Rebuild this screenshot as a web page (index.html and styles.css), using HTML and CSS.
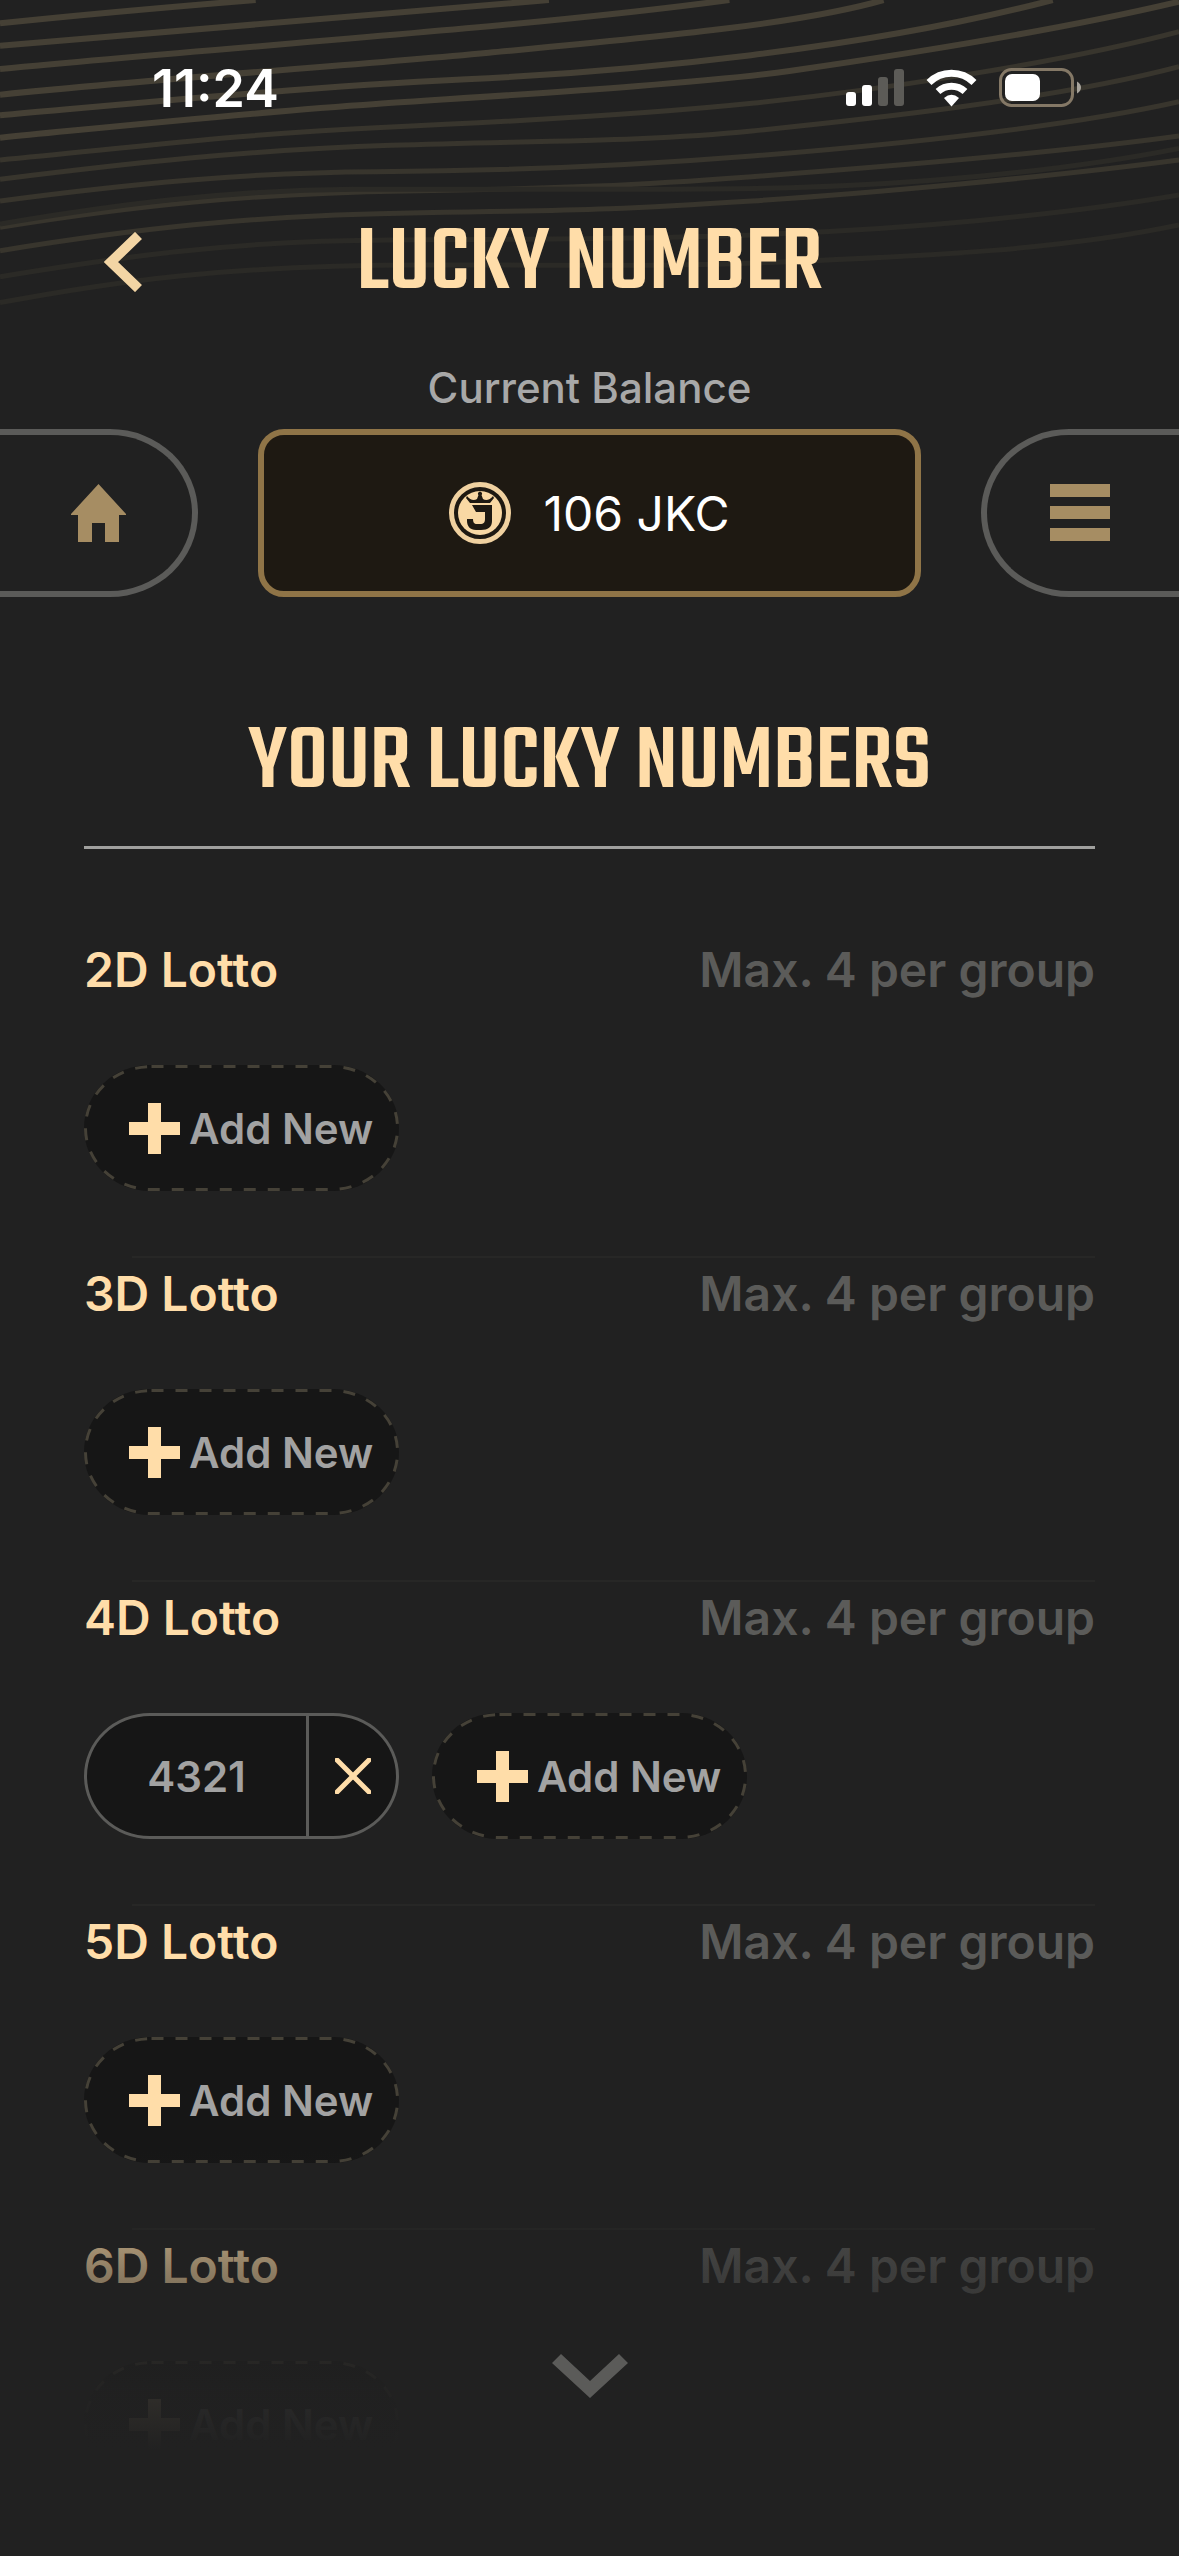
FILE: index.html
```html
<!DOCTYPE html>
<html lang="en">
<head>
<meta charset="utf-8">
<meta name="viewport" content="width=device-width, initial-scale=1">
<title>Lucky Number</title>
<link rel="stylesheet" href="styles.css">
</head>
<body>
<svg class="waves" viewBox="0 0 1568 1020" preserveAspectRatio="none" aria-hidden="true">
  <g class="waves-strong">
    <path d="M0 70C110 44 220 22 340 0"/>
    <path d="M0 137C250 88 500 48 730 0"/>
    <path d="M0 207C350 132 700 82 970 0"/>
    <path d="M0 284C250 228 450 200 650 158S1060 75 1175 0"/>
    <path d="M0 346C200 306 400 262 620 238S1150 148 1400 0"/>
    <path d="M0 413C170 376 330 338 500 312S930 252 1050 213S1400 95 1568 5"/>
  </g>
  <g class="waves-mid">
    <path d="M0 480C170 444 330 400 500 383S850 345 1000 310S1400 195 1568 95"/>
    <path d="M0 538C170 490 330 450 520 436S860 425 1000 393S1400 300 1568 200"/>
    <path d="M0 603C170 552 330 517 500 515S850 495 1000 468S1400 390 1568 305"/>
    <path d="M0 682C170 620 330 580 540 573S850 555 1000 530S1400 460 1568 408"/>
    <path d="M0 752C170 690 330 645 560 638S850 625 1000 603S1400 530 1568 480"/>
  </g>
  <g class="waves-faint">
    <path d="M0 672C150 615 300 570 470 568S900 572 1050 563S1400 520 1568 445"/>
    <path d="M0 830C150 775 300 722 520 720S900 715 1050 700S1400 650 1568 585"/>
    <path d="M0 908C150 845 300 795 560 795S900 800 1050 785S1400 755 1568 675"/>
  </g>
</svg>

<div class="status">
  <time class="clock">11:24</time>
  <svg class="status-icons" viewBox="0 0 236 40" aria-hidden="true">
    <g fill="#fff"><rect x="0" y="24" width="10" height="14" rx="3"/><rect x="16" y="17" width="10" height="21" rx="3"/></g>
    <g fill="#5c5b57"><rect x="32" y="9" width="10" height="29" rx="3"/><rect x="48" y="1" width="10" height="37" rx="3"/></g>
    <g fill="none" stroke="#fff" stroke-width="7"><path d="M83 14.500A32 32 0 0 1 128 14.500"/><path d="M92 23.500A20 20 0 0 1 119 23.500"/></g>
    <path fill="#fff" d="M105.500 38.500L98 30Q105.500 23.500 113 30Z"/>
    <rect x="154.500" y="1.500" width="72" height="36" rx="11" fill="none" stroke="#847866" stroke-width="3"/>
    <rect x="159" y="6" width="35" height="27" rx="7" fill="#fff"/>
    <path fill="#a8a49c" d="M231 13.500Q235 16 235 19.500T231 25.500Z"/>
  </svg>
</div>

<header class="topbar">
  <button class="back" type="button" aria-label="Back">
    <svg viewBox="0 0 38 60"><path d="M34.500 3.500L7 30L34.500 56.500" fill="none" stroke="#f3d5a4" stroke-width="10"/></svg>
  </button>
  <h1 class="title">LUCKY NUMBER</h1>
</header>

<p class="balance-label">Current Balance</p>
<nav class="nav">
  <a class="tab tab-left" href="#home" aria-label="Home">
    <svg class="home" viewBox="0 0 55 58"><path fill="#a68d63" d="M27.500 0L55 30V31H48V58H34V39H21V58H7V31H0V30Z"/></svg>
  </a>
  <div class="balance">
    <svg class="coin" viewBox="0 0 62 62" aria-hidden="true">
      <circle cx="31" cy="31" r="28.500" fill="none" stroke="#f0d1a0" stroke-width="5"/>
      <circle cx="31" cy="31" r="22" fill="#f9d8a4"/>
      <path fill="#1e1912" d="M18 14C21 18 25 19 28 17L29.500 13A2 2 0 1 1 32.500 13L34 17C37 19 41 18 44 14L45 16L41 21H21L17 16ZM23 23H43V39C43 45 39 48 32 48H27C21 48 18 44 18 39V37H24C24 40 25 42 28 42H31C35 42 36 40 36 37V30H27Z"/>
    </svg>
    <span>106 JKC</span>
  </div>
  <button class="tab tab-right" type="button" aria-label="Menu">
    <svg class="menu" viewBox="0 0 60 58"><path fill="#a68d63" d="M0 0H60V13H0ZM0 22H60V35H0ZM0 44H60V57H0Z"/></svg>
  </button>
</nav>

<main class="content">
  <h2 class="title section-title">YOUR LUCKY NUMBERS</h2>

  <section class="group">
    <div class="group-head"><h3>2D Lotto</h3><p>Max. 4 per group</p></div>
    <div class="chips">
      <button class="chip add" type="button">
        <svg class="dashes" viewBox="0 0 315 126"><rect x="1.500" y="1.500" width="312" height="123" rx="66" ry="61"/></svg>
        <svg class="plus" viewBox="0 0 51 51"><path d="M19 0H32V19H51V32H32V51H19V32H0V19H19Z"/></svg>
        Add New
      </button>
    </div>
  </section>

  <section class="group">
    <div class="group-head"><h3>3D Lotto</h3><p>Max. 4 per group</p></div>
    <div class="chips">
      <button class="chip add" type="button">
        <svg class="dashes" viewBox="0 0 315 126"><rect x="1.500" y="1.500" width="312" height="123" rx="66" ry="61"/></svg>
        <svg class="plus" viewBox="0 0 51 51"><path d="M19 0H32V19H51V32H32V51H19V32H0V19H19Z"/></svg>
        Add New
      </button>
    </div>
  </section>

  <section class="group">
    <div class="group-head"><h3>4D Lotto</h3><p>Max. 4 per group</p></div>
    <div class="chips">
      <div class="chip number">
        <span>4321</span>
        <button class="remove" type="button" aria-label="Remove 4321"><svg viewBox="0 0 36 36"><path d="M2 2L34 34M34 2L2 34" stroke="#ffdda9" stroke-width="5" stroke-linecap="round"/></svg></button>
      </div>
      <button class="chip add" type="button">
        <svg class="dashes" viewBox="0 0 315 126"><rect x="1.500" y="1.500" width="312" height="123" rx="66" ry="61"/></svg>
        <svg class="plus" viewBox="0 0 51 51"><path d="M19 0H32V19H51V32H32V51H19V32H0V19H19Z"/></svg>
        Add New
      </button>
    </div>
  </section>

  <section class="group">
    <div class="group-head"><h3>5D Lotto</h3><p>Max. 4 per group</p></div>
    <div class="chips">
      <button class="chip add" type="button">
        <svg class="dashes" viewBox="0 0 315 126"><rect x="1.500" y="1.500" width="312" height="123" rx="66" ry="61"/></svg>
        <svg class="plus" viewBox="0 0 51 51"><path d="M19 0H32V19H51V32H32V51H19V32H0V19H19Z"/></svg>
        Add New
      </button>
    </div>
  </section>

  <section class="group">
    <div class="group-head"><h3>6D Lotto</h3><p>Max. 4 per group</p></div>
    <div class="chips">
      <button class="chip add" type="button">
        <svg class="dashes" viewBox="0 0 315 126"><rect x="1.500" y="1.500" width="312" height="123" rx="66" ry="61"/></svg>
        <svg class="plus" viewBox="0 0 51 51"><path d="M19 0H32V19H51V32H32V51H19V32H0V19H19Z"/></svg>
        Add New
      </button>
    </div>
  </section>
</main>

<div class="fade">
  <button class="more" type="button" aria-label="Show more">
    <svg viewBox="0 0 76 44"><path d="M0 9L9 0L38 27L67 0L76 9L38 44Z" fill="#5b5b59"/></svg>
  </button>
</div>
</body>
</html>
```
FILE: styles.css
```css
* {
  box-sizing: border-box;
}

body {
  position: relative;
  margin: 0;
  min-height: 100vh;
  background: #212121;
  color: #fff;
  font-family: Inter, "Liberation Sans", sans-serif;
  overflow-x: hidden;
}

h1, h2, h3, p {
  margin: 0;
}

svg {
  display: block;
  flex: none;
}

button {
  padding: 0;
  border: 0;
  background: none;
  color: inherit;
  font: inherit;
}

.waves {
  position: absolute;
  top: 0;
  left: 0;
  z-index: -1;
  width: 100%;
  height: 340px;
  fill: none;
}

.waves path {
  vector-effect: non-scaling-stroke;
}

.waves-strong {
  stroke: #454035;
  stroke-width: 6px;
}

.waves-mid {
  stroke: #38352d;
  stroke-width: 5px;
}

.waves-faint {
  stroke: #2b2a26;
  stroke-width: 5px;
}

.status {
  display: flex;
  align-items: center;
  justify-content: space-between;
  height: 176px;
  padding: 0 97px 0 152px;
}

.clock {
  font-size: 52px;
  font-weight: 600;
}

.status-icons {
  width: 236px;
  height: 40px;
}

.topbar {
  display: grid;
  grid-template-columns: 38px 1fr 38px;
  align-items: center;
  height: 172px;
  padding: 0 104px;
}

.back svg {
  width: 38px;
  height: 60px;
}

.title {
  padding-top: 6px;
  color: #ffdda9;
  font-family: Teko, Roboto, "Liberation Sans", sans-serif;
  font-size: 96px;
  font-weight: 500;
  line-height: 84px;
  text-align: center;
  white-space: nowrap;
}

.balance-label {
  padding: 12px 0 13px;
  color: #a8a8a8;
  font-size: 42px;
  font-weight: 500;
  line-height: 56px;
  text-align: center;
}

.nav {
  display: grid;
  grid-template-columns: 198px 1fr 198px;
  gap: 60px;
  height: 168px;
}

.tab {
  display: flex;
  align-items: center;
  border: 6px solid #5b5b59;
}

.tab-left {
  justify-content: flex-end;
  padding-right: 66px;
  border-left: 0;
  border-radius: 0 88px 88px 0 / 0 84px 84px 0;
}

.tab-right {
  padding-left: 63px;
  border-right: 0;
  border-radius: 88px 0 0 88px / 84px 0 0 84px;
}

.home {
  width: 55px;
  height: 58px;
}

.menu {
  width: 60px;
  height: 58px;
}

.balance {
  display: flex;
  align-items: center;
  justify-content: center;
  gap: 32px;
  border: 6px solid #8f7447;
  border-radius: 26px;
  background: #1e1912;
  font-size: 48px;
}

.coin {
  width: 62px;
  height: 62px;
}

.content {
  padding: 119px 84px 0;
}

.section-title {
  padding-bottom: 40px;
  margin-bottom: 85px;
  border-bottom: 3px solid #a0a09e;
}

.group {
  height: 324px;
}

.group:not(:last-child) {
  background: linear-gradient(#272726, #272726) 48px 322px / 100% 2px no-repeat;
}

.group-head {
  display: flex;
  justify-content: space-between;
  margin-bottom: 59px;
  color: #5b5b59;
  font-size: 48px;
  font-weight: 600;
  line-height: 72px;
}

.group-head h3 {
  color: #ffdda9;
  font-size: 48px;
  font-weight: 600;
}

.chips {
  display: flex;
  gap: 33px;
}

.chip {
  display: flex;
  align-items: center;
  width: 315px;
  height: 126px;
  border-radius: 66px / 63px;
  background: #161616;
  color: #a2a2a2;
  font-size: 42px;
  font-weight: 600;
}

.add {
  position: relative;
  gap: 9px;
  padding-left: 45px;
  white-space: nowrap;
}

.dashes {
  position: absolute;
  inset: 0;
  width: 100%;
  height: 100%;
  fill: none;
  stroke: #454137;
  stroke-width: 3px;
  stroke-dasharray: 12 12;
}

.plus {
  width: 51px;
  height: 51px;
  fill: #ffdda9;
}

.number {
  border: 3px solid #5b5b59;
}

.number span {
  flex: 1;
  text-align: center;
}

.remove {
  display: flex;
  align-items: center;
  width: 90px;
  height: 100%;
  padding-left: 26px;
  border-left: 3px solid #5b5b59;
}

.remove svg {
  width: 36px;
  height: 36px;
}

.fade {
  position: absolute;
  right: 0;
  bottom: 0;
  left: 0;
  display: flex;
  align-items: flex-end;
  justify-content: center;
  height: 406px;
  padding-bottom: 158px;
  background: linear-gradient(rgba(33, 33, 33, 0), rgba(33, 33, 33, 0.5) 120px, rgba(33, 33, 33, 0.93) 240px, #212121 300px);
}

.more svg {
  width: 76px;
  height: 44px;
}
```
